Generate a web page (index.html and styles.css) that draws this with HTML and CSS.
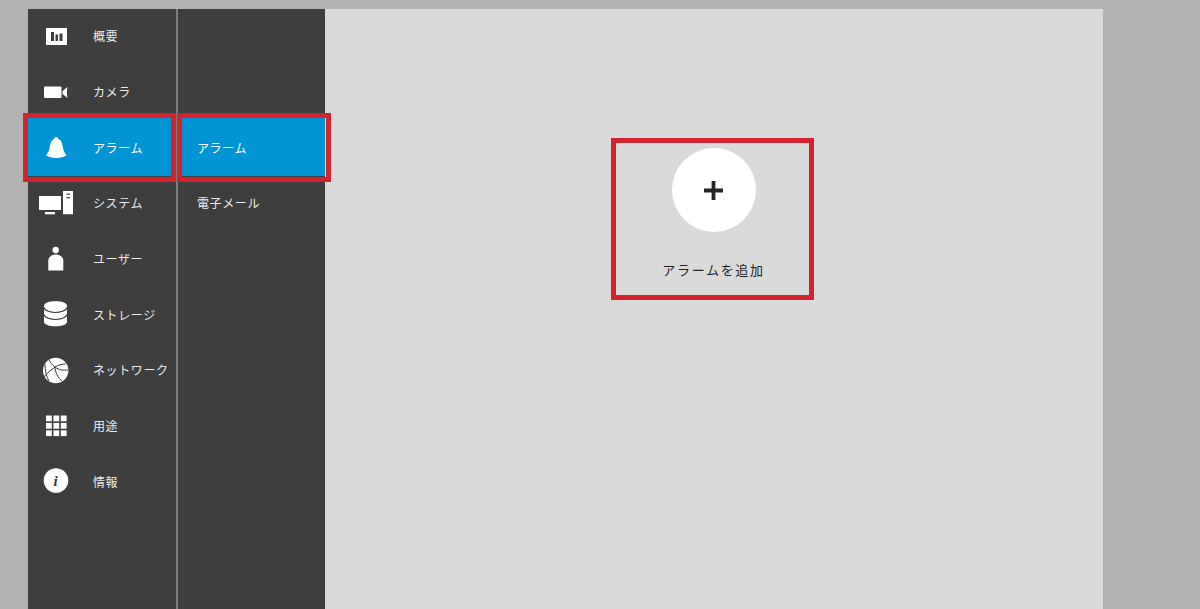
FILE: index.html
```html
<!DOCTYPE html>
<html lang="ja">
<head>
  <meta charset="UTF-8" />
  <title>アラーム</title>
  <link rel="stylesheet" href="styles.css">
</head>
<body>
  <div class="app">
    <nav class="sidebar">
      <a class="nav-item" href="#">
        <svg class="nav-icon" viewBox="0 0 36 30">
          <path fill="#fff" fill-rule="evenodd" d="M8 6h21v17H8z M13 10v9h3v-9z M17.5 12.5V19H20v-6.500z M21.500 11.500V19h3v-7.500z"/>
        </svg>
        <span>概要</span>
      </a>
      <a class="nav-item" href="#">
        <svg class="nav-icon" viewBox="0 0 36 30">
          <rect fill="#fff" x="6" y="8.500" width="17.500" height="11.500" rx="1"/>
          <path fill="#fff" d="M24.500 13 29.500 9c-.8 3.500-.8 7.500 0 11l-5-4z"/>
        </svg>
        <span>カメラ</span>
      </a>
      <a class="nav-item active" href="#">
        <svg class="nav-icon" viewBox="0 0 36 30">
          <path fill="#fff" d="M18.300 4c-1.300 0-2 1-2 2-3 1-4 4-4.500 8-.4 3.500-2 6-3.800 8.500 3 1.500 6 2.500 10.300 2.500s7.300-1 10.300-2.500c-1.800-2.500-3.400-5-3.800-8.500-.5-4-1.500-7-4.500-8 0-1-.7-2-2-2z"/>
        </svg>
        <span>アラーム</span>
      </a>
      <a class="nav-item" href="#">
        <svg class="nav-icon" viewBox="0 0 36 30">
          <rect fill="#fff" x="1" y="7" width="22" height="14"/>
          <rect fill="#fff" x="7" y="23" width="10" height="2.300"/>
          <path fill="#fff" fill-rule="evenodd" d="M25 2h10v23.300H25z M28.500 4.500v1.200H32V4.500z M28.500 8v1.200H32V8z"/>
        </svg>
        <span>システム</span>
      </a>
      <a class="nav-item" href="#">
        <svg class="nav-icon" viewBox="0 0 36 30">
          <circle fill="#fff" cx="17.700" cy="5" r="3.200"/>
          <path fill="#fff" d="M10.300 25.500v-10c0-3 3-6 7.500-6s7.500 3 7.500 6v10z"/>
        </svg>
        <span>ユーザー</span>
      </a>
      <a class="nav-item" href="#">
        <svg class="nav-icon" viewBox="0 0 36 30">
          <path fill="#fff" d="M6 6C6 2.500 12 1.200 17.500 1.200S29 2.500 29 6v15.500c0 3.500-6 4.800-11.500 4.800S6 25 6 21.500z"/>
          <path fill="none" stroke="#3e3e3e" stroke-width="1.100" d="M6 7.500c1 3.500 7 5 11.500 5S28 11 29 7.500M6 14.500c1 3.500 7 5 11.500 5S28 18 29 14.500"/>
        </svg>
        <span>ストレージ</span>
      </a>
      <a class="nav-item" href="#">
        <svg class="nav-icon" viewBox="0 0 36 30">
          <circle fill="#fff" cx="17.700" cy="14.500" r="12.700"/>
          <path fill="none" stroke="#3e3e3e" stroke-width="1" d="M11 3.500c1 3 3.500 5.500 6 7.500 3-2 7-3 10.500-3M17 11c-4 3-8 6-11.500 10.500M17 11c4 3 8.500 3.500 13 3M17 11c0 5 3 11 7 14M7 8c0 6 1 12 4 17"/>
        </svg>
        <span>ネットワーク</span>
      </a>
      <a class="nav-item" href="#">
        <svg class="nav-icon" viewBox="0 0 36 30">
          <g fill="#fff">
            <rect x="8" y="3.500" width="5.800" height="5.800"/>
            <rect x="15.400" y="3.500" width="5.800" height="5.800"/>
            <rect x="22.800" y="3.500" width="5.800" height="5.800"/>
            <rect x="8" y="10.900" width="5.800" height="5.800"/>
            <rect x="15.400" y="10.900" width="5.800" height="5.800"/>
            <rect x="22.800" y="10.900" width="5.800" height="5.800"/>
            <rect x="8" y="18.300" width="5.800" height="5.800"/>
            <rect x="15.400" y="18.300" width="5.800" height="5.800"/>
            <rect x="22.800" y="18.300" width="5.800" height="5.800"/>
          </g>
        </svg>
        <span>用途</span>
      </a>
      <a class="nav-item" href="#">
        <svg class="nav-icon" viewBox="0 0 36 30">
          <circle fill="#fff" cx="18" cy="13.500" r="12.300"/>
          <text class="info-glyph" x="18" y="18.500" text-anchor="middle">i</text>
        </svg>
        <span>情報</span>
      </a>
      <div class="marker marker-main"></div>
    </nav>

    <nav class="submenu">
      <a class="nav-item active" href="#"><span>アラーム</span></a>
      <a class="nav-item" href="#"><span>電子メール</span></a>
      <div class="marker marker-sub"></div>
    </nav>

    <main class="content">
      <div class="add-box">
        <button class="add-button" title="アラームを追加">
          <svg class="plus" viewBox="0 0 20 20">
            <path fill="#262626" d="M8 0h4v8h8v4h-8v8H8v-8H0V8h8z"/>
          </svg>
        </button>
        <div class="add-label">アラームを追加</div>
      </div>
    </main>
  </div>
</body>
</html>
```

FILE: styles.css
```css
* {
  box-sizing: border-box;
}

html, body {
  height: 100%;
}

body {
  margin: 0;
  padding: 9px 0 0 28px;
  font-family: "Noto Sans CJK JP", "Noto Sans", sans-serif;
  background-color: #b3b3b3;
  overflow: hidden;
}

.app {
  display: flex;
  width: 1075px;
  height: 600px;
}

.sidebar,
.submenu {
  position: relative;
  background-color: #3e3e3e;
}

.sidebar {
  flex: 0 0 150px;
  border-right: 2px solid #7d7d7d;
}

.submenu {
  flex: 0 0 147px;
  padding-top: 111.400px;
}

.nav-item {
  display: flex;
  align-items: center;
  height: 55.700px;
  color: #ececec;
  font-size: 12px;
  letter-spacing: 0.6px;
  text-decoration: none;
  white-space: nowrap;
}

.nav-item span {
  margin-bottom: 2px;
}

.nav-item.active {
  background-color: #0094d4;
  box-shadow: 0 -3px 0 #0094d4;
  color: #fff;
}

.sidebar .nav-item {
  padding-left: 10px;
  gap: 19px;
}

.submenu .nav-item {
  padding-left: 19px;
}

.nav-icon {
  flex: 0 0 36px;
  width: 36px;
  height: 30px;
}

.info-glyph {
  font-family: "Liberation Serif", serif;
  font-size: 15px;
  font-weight: 700;
  font-style: italic;
  fill: #333;
}

/* red annotation boxes drawn over the menus */
.marker {
  position: absolute;
  top: 103.500px;
  height: 69.500px;
  border: 5px solid #d3232e;
}

.marker-main {
  left: -5px;
  width: 153px;
}

.marker-sub {
  left: -1px;
  width: 154px;
}

.content {
  flex: 1;
  display: flex;
  justify-content: center;
  align-items: flex-start;
  background-color: #dadada;
}

.add-box {
  width: 203px;
  height: 162px;
  margin: 129px 3px 0 0;
  border: 5px solid #d3232e;
  display: flex;
  flex-direction: column;
  align-items: center;
  padding: 5px 0 0 2px;
}

.add-button {
  width: 84px;
  height: 84px;
  padding: 0;
  border: none;
  border-radius: 50%;
  background-color: #fff;
  display: flex;
  align-items: center;
  justify-content: center;
}

.plus {
  width: 19px;
  height: 19px;
}

.add-label {
  margin-top: 28px;
  font-size: 13px;
  line-height: 20px;
  letter-spacing: 1.700px;
  color: #222;
}
```
